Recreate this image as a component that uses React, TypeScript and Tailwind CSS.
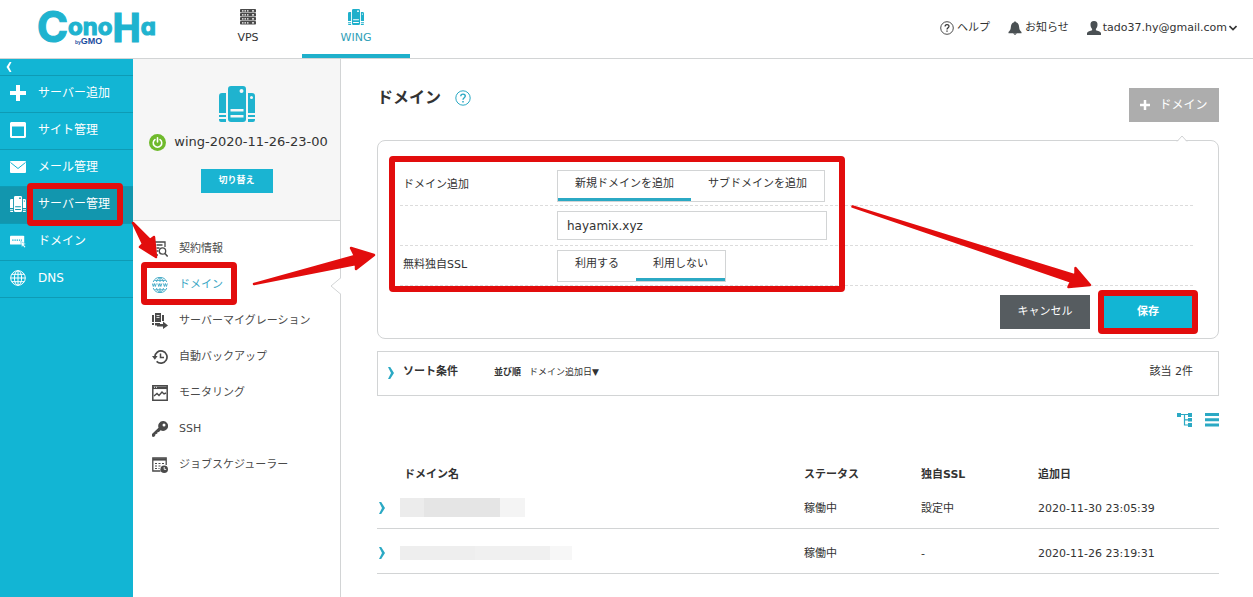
import { ReactNode, useState } from 'react'
import { clsx } from 'clsx'

const FONT = "font-['DejaVu_Sans','Noto_Sans_CJK_JP',sans-serif]"

interface IconProps {
  className?: string
}

function Logo() {
  return (
    <svg viewBox="0 0 114 36" className="h-9 w-[114px] overflow-visible" role="img" aria-label="ConoHa by GMO">
      <text
        x="-2"
        y="32"
        fill="#1fb3cf"
        stroke="#1fb3cf"
        strokeWidth="1.200"
        fontWeight="700"
        className="font-['Inter',sans-serif] [font-feature-settings:'cv11']"
      >
        <tspan fontSize="42">C</tspan>
        <tspan fontSize="24" dy="-7">ono</tspan>
        <tspan fontSize="40" dy="7" className="font-['Roboto',sans-serif]">H</tspan>
        <tspan fontSize="24" dy="-7">a</tspan>
      </text>
      <g fill="#1b4da0" className="font-['Liberation_Sans',sans-serif]" fontWeight="700">
        <text x="36" y="34">
          <tspan fontSize="5">by</tspan>
          <tspan fontSize="9">GMO</tspan>
        </text>
      </g>
    </svg>
  )
}

function WingIcon({ className }: IconProps) {
  return (
    <svg viewBox="0 0 36 36" className={className} fill="currentColor" aria-hidden="true">
      <path d="M7 7v20H0V10a3 3 0 0 1 3-3zM0 29h7v2H0zM0 33h7v3H2a2 2 0 0 1-2-2z" />
      <path
        fillRule="evenodd"
        d="M12 0h12a3 3 0 0 1 3 3v30a3 3 0 0 1-3 3H12a3 3 0 0 1-3-3V3a3 3 0 0 1 3-3zM22.500 3a2 2 0 1 0 0 4a2 2 0 0 0 0-4zM11.500 23v2.500h13V23zM11.500 29v2.500h13V29z"
      />
      <path
        fillRule="evenodd"
        d="M29 7h4a3 3 0 0 1 3 3v17h-7zM32.500 10a1.500 1.500 0 1 0 0 3a1.500 1.500 0 0 0 0-3zM29 29h7v2h-7zM29 33h7v1a2 2 0 0 1-2 2h-5z"
      />
    </svg>
  )
}

function VpsIcon({ className }: IconProps) {
  return (
    <svg viewBox="0 0 16 16" className={className} aria-hidden="true">
      {[0, 4, 8, 12].map((y) => (
        <g key={y}>
          <rect x="0" y={y} width="16" height="3.500" rx="0.800" fill="#4a4a4a" />
          <path d={`M2 ${y + 1.8}h1.500M4.500 ${y + 1.8}h1.500M7 ${y + 1.8}h1.500M12 ${y + 1.8}h2`} stroke="#fff" strokeWidth="1.200" />
        </g>
      ))}
    </svg>
  )
}

function PlusIcon({ className }: IconProps) {
  return (
    <svg viewBox="0 0 16 16" className={className} fill="currentColor" aria-hidden="true">
      <path d="M6 0h4v6h6v4h-6v6H6v-6H0V6h6z" />
    </svg>
  )
}

function SiteIcon({ className }: IconProps) {
  return (
    <svg viewBox="0 0 16 16" className={className} fill="currentColor" aria-hidden="true">
      <path fillRule="evenodd" d="M1 0h14l1 1v14l-1 1H1l-1-1V1zM2 4.500V14h12V4.500z" />
    </svg>
  )
}

function MailIcon({ className }: IconProps) {
  return (
    <svg viewBox="0 0 16 16" className={className} aria-hidden="true">
      <rect y="2" width="16" height="12" rx="1" fill="currentColor" />
      <path d="M.5 3.500L8 9.500l7.500-6" fill="none" stroke="#12b5d4" strokeWidth="1" />
    </svg>
  )
}

function DomainIcon({ className }: IconProps) {
  return (
    <svg viewBox="0 0 18 16" className={className} aria-hidden="true">
      <rect y="2" width="16" height="10" rx="1" fill="currentColor" />
      <path d="M2.500 7h1.500M5 7h1.500M7.500 7h1.500M10 7h1.500M12.500 7h1" stroke="#12b5d4" strokeWidth="1.300" />
      <path d="M12 8.500l6 3-2.300.8 1.800 2.200-1.200 1-1.800-2.200-1.200 1.700z" fill="currentColor" stroke="#12b5d4" strokeWidth="0.500" />
    </svg>
  )
}

function GlobeIcon({ className }: IconProps) {
  return (
    <svg viewBox="0 0 16 16" className={className} fill="none" stroke="currentColor" strokeWidth="1" aria-hidden="true">
      <circle cx="8" cy="8" r="7.300" />
      <ellipse cx="8" cy="8" rx="3.600" ry="7.300" />
      <path d="M8 .7v14.600M.7 8h14.600M1.800 4.300h12.400M1.800 11.700h12.400" />
    </svg>
  )
}

function ContractIcon({ className }: IconProps) {
  return (
    <svg viewBox="0 0 16 16" className={className} fill="none" stroke="currentColor" strokeWidth="1.300" aria-hidden="true">
      <path d="M13 6V1H2v13h4M4.500 4h6M4.500 7h3M4.500 10h2" />
      <circle cx="10.500" cy="10" r="3.200" />
      <path d="M13 12.500l2.700 3" strokeWidth="1.600" />
    </svg>
  )
}

function WwwIcon({ className }: IconProps) {
  return (
    <svg viewBox="0 0 16 16" className={className} fill="none" stroke="currentColor" strokeWidth="0.900" aria-hidden="true">
      <path d="M1.200 5A7.300 7.300 0 0 1 14.800 5M1.200 11A7.300 7.300 0 0 0 14.800 11M8 .7V5M8 11v4.300M4.500 5C5 3 6 1.500 8 .7C10 1.500 11 3 11.500 5M4.500 11C5 13 6 14.500 8 15.300C10 14.500 11 13 11.500 11M2.500 3.400h11M2.500 12.800h11" />
      <path d="M.3 6.500l1 3 1-3 1 3 1-3M5.800 6.500l1 3 1-3 1 3 1-3M11.400 6.500l1 3 1-3 1 3 1-3" />
    </svg>
  )
}

function MigrationIcon({ className }: IconProps) {
  return (
    <svg viewBox="0 0 16 16" className={className} fill="currentColor" aria-hidden="true">
      <path d="M0 2h2v7H0zM3 0h6v9H3zM10 2h2v6h-2zM0 10h2v2H0zM3 10h5v2.500H3z" />
      <path d="M4.500 2.500h3M4.500 4.500h3" stroke="#fff" strokeWidth="0.800" />
      <path d="M5 11h6V8.500l5 4-5 3.500v-2.500H5z" />
    </svg>
  )
}

function BackupIcon({ className }: IconProps) {
  return (
    <svg viewBox="0 0 16 16" className={className} fill="none" stroke="currentColor" strokeWidth="1.700" aria-hidden="true">
      <path d="M2.800 8a6.100 6.100 0 1 1 1.800 4.400" />
      <path d="M0 7h5.600L2.800 10.800z" fill="currentColor" stroke="none" />
      <path d="M8.500 4.500v4h3.500" strokeWidth="1.500" />
    </svg>
  )
}

function MonitorIcon({ className }: IconProps) {
  return (
    <svg viewBox="0 0 16 16" className={className} fill="none" stroke="currentColor" aria-hidden="true">
      <path d="M.8.8h14.400v14.400H.8z" strokeWidth="1.500" />
      <path d="M1 2.800h14" strokeWidth="2.500" />
      <path d="M2 11l3-2.500 2 2L10 7l2 2 2-1" strokeWidth="1.400" />
      <path d="M2 2.300h1M4 2.300h1" stroke="#fff" strokeWidth="0.900" />
    </svg>
  )
}

function KeyIcon({ className }: IconProps) {
  return (
    <svg viewBox="0 0 16 16" className={className} aria-hidden="true">
      <path
        fill="currentColor"
        fillRule="evenodd"
        d="M11 0a5 5 0 1 1-2.400 9.300L7 11l-1.500.2-.3 1.600-1.600.2-.4 1.600L2 16 0 15.500V13l6.500-6.300A5 5 0 0 1 11 0zM12 2.500a1.500 1.500 0 1 0 0 3a1.500 1.500 0 0 0 0-3z"
      />
    </svg>
  )
}

function SchedulerIcon({ className }: IconProps) {
  return (
    <svg viewBox="0 0 16 16" className={className} aria-hidden="true">
      <path d="M8.500 14H.8V1h13.400v7" fill="none" stroke="currentColor" strokeWidth="1.300" />
      <path d="M1 2.500h13" stroke="currentColor" strokeWidth="2.200" />
      <path d="M3 6.500h2M6.500 6.500h2M10 6.500h2M3 9h2M6.500 9h2M3 11.500h2M6.500 11.500h1" stroke="currentColor" strokeWidth="1.200" />
      <circle cx="12.200" cy="12.200" r="3.800" fill="currentColor" />
      <path d="M12.200 10v2.400h2" fill="none" stroke="#fff" strokeWidth="0.900" />
    </svg>
  )
}

function HelpIcon({ className }: IconProps) {
  return (
    <svg viewBox="0 0 16 16" className={className} fill="none" stroke="currentColor" aria-hidden="true">
      <circle cx="8" cy="8" r="7.200" strokeWidth="1" />
      <path d="M5.800 6.300C5.800 3.400 10.300 3.500 10.300 6.100C10.300 7.700 8 7.800 8 9.800" strokeWidth="1.400" />
      <path d="M8 10.900v1.500" strokeWidth="1.500" />
    </svg>
  )
}

function BellIcon({ className }: IconProps) {
  return (
    <svg viewBox="0 0 14 14" className={className} fill="currentColor" aria-hidden="true">
      <path d="M7 0l1 1.200C10.500 2 11 4 11.200 6.500C11.400 8.800 12 9.700 13.500 11v1.200H.5V11C2 9.700 2.600 8.800 2.800 6.500C3 4 3.500 2 6 1.200zM5 12.600h4L7 14z" />
    </svg>
  )
}

function UserIcon({ className }: IconProps) {
  return (
    <svg viewBox="0 0 14 14" className={className} fill="currentColor" aria-hidden="true">
      <path d="M7 0C9.500 0 10.700 1.600 10.500 4C10.300 6.200 9.500 7 8.900 8v1.300c1.800.7 4.600 1.200 5.100 2.600V14H0v-2.100c.5-1.400 3.300-1.900 5.100-2.600V8C4.500 7 3.700 6.200 3.500 4C3.300 1.600 4.500 0 7 0z" />
    </svg>
  )
}

function PowerIcon({ className }: IconProps) {
  return (
    <svg viewBox="0 0 16 16" className={className} fill="none" stroke="#fff" strokeWidth="1.500" strokeLinecap="round" aria-hidden="true">
      <circle cx="8" cy="8" r="8" fill="#6fba2c" stroke="none" />
      <path d="M5.600 5.200a4 4 0 1 0 4.800 0M8 3.600v4" />
    </svg>
  )
}

function Chevron({ className }: IconProps) {
  return (
    <svg viewBox="0 0 6 12" className={clsx('w-[6px]', className)} fill="currentColor" aria-hidden="true">
      <path d="M0 0h2.200L6 6l-3.800 6H0l3-6z" />
    </svg>
  )
}

// red frame laid over the control it points out
function Highlight({ className }: IconProps) {
  return <span className={clsx('pointer-events-none absolute z-10 rounded border-[6px] border-[#e20d0d]', className)} />
}

interface NavEntry {
  label: string
  icon: (props: IconProps) => ReactNode
  marked?: boolean
}

const mainNav: NavEntry[] = [
  { label: 'サーバー追加', icon: PlusIcon },
  { label: 'サイト管理', icon: SiteIcon },
  { label: 'メール管理', icon: MailIcon },
  { label: 'サーバー管理', icon: WingIcon, marked: true },
  { label: 'ドメイン', icon: DomainIcon },
  { label: 'DNS', icon: GlobeIcon },
]

const subNav: NavEntry[] = [
  { label: '契約情報', icon: ContractIcon },
  { label: 'ドメイン', icon: WwwIcon, marked: true },
  { label: 'サーバーマイグレーション', icon: MigrationIcon },
  { label: '自動バックアップ', icon: BackupIcon },
  { label: 'モニタリング', icon: MonitorIcon },
  { label: 'SSH', icon: KeyIcon },
  { label: 'ジョブスケジューラー', icon: SchedulerIcon },
]

function Header() {
  return (
    <header className="flex h-[59px] items-stretch border-b border-[#d2d4d5]">
      <a href="#" className="pt-[10px] pl-[39px]">
        <Logo />
      </a>
      <nav className="ml-[41px] flex text-[11px] leading-4">
        <a href="#" className="flex w-[108px] flex-col items-center gap-[5px] pt-[9px]">
          <VpsIcon className="size-4" />
          VPS
        </a>
        <a href="#" className="flex w-[108px] flex-col items-center gap-[5px] border-b-4 border-[#1fb0cb] pt-[9px] text-[#2f9fb8]">
          <WingIcon className="size-4 text-[#1fb0cb]" />
          WING
        </a>
      </nav>
      <div className="ml-auto flex items-center gap-[18px] pr-4 pb-[2px] text-[11px]">
        <a href="#" className="flex items-center gap-[3px]">
          <HelpIcon className="size-[14px]" />
          ヘルプ
        </a>
        <a href="#" className="flex items-center gap-[3px]">
          <BellIcon className="size-[14px] text-[#4a5053]" />
          お知らせ
        </a>
        <button type="button" className="flex items-center gap-[2px]">
          <UserIcon className="size-[14px] text-[#4a5053]" />
          tado37.hy@gmail.com
          <svg viewBox="0 0 8 6" className="h-[6px] w-2" fill="none" stroke="currentColor" strokeWidth="1.600" aria-hidden="true">
            <path d="M.5 1L4 4.500L7.500 1" />
          </svg>
        </button>
      </div>
    </header>
  )
}

function MainNav() {
  return (
    <nav className="w-[133px] shrink-0 bg-[#12b5d4] text-xs text-white">
      <button type="button" aria-label="閉じる" className="flex h-[17px] w-full items-center border-b border-[#0e9bb5] pl-[6px]">
        <Chevron className="h-[10px] rotate-180" />
      </button>
      {mainNav.map(({ label, icon: Icon, marked }) => (
        <a
          key={label}
          href="#"
          className={clsx('relative flex h-[37px] items-center gap-3 border-b border-[#0e9bb5] pb-[2px] pl-[10px]', marked && 'bg-[#1296ae]')}
        >
          <Icon className="size-4 shrink-0" />
          {label}
          {marked && <Highlight className="-top-1 -bottom-[3px] left-[27px] right-[10px]" />}
        </a>
      ))}
    </nav>
  )
}

function ServerPanel() {
  return (
    <aside className="w-[208px] shrink-0 border-r border-[#d2d4d5] text-[11px]">
      <div className="flex h-[162px] flex-col items-center border-b border-[#d2d4d5] bg-[#f6f6f6] pt-[27px]">
        <WingIcon className="size-9 text-[#1fb3cf]" />
        <p className="mt-[10px] flex items-center gap-2 pl-1 text-[13px] leading-5">
          <PowerIcon className="size-[17px]" />
          wing-2020-11-26-23-00
        </p>
        <button type="button" className="mt-[17px] h-6 w-[72px] bg-[#1ab4d2] text-[9px] font-bold text-white">
          切り替え
        </button>
      </div>
      <nav className="pt-[10px]">
        {subNav.map(({ label, icon: Icon, marked }) => (
          <a
            key={label}
            href="#"
            className={clsx('relative flex h-9 items-center gap-[11px] pl-[19px]', marked ? 'text-[#3aa6c4]' : 'text-[#4a4a4a]')}
          >
            <Icon className="size-4 shrink-0" />
            {label}
            {marked && (
              <>
                <Highlight className="-top-[5px] -bottom-[2px] left-2 w-24" />
                <svg viewBox="0 0 11 18" className="absolute top-[10px] -right-px h-[18px] w-[11px]" aria-hidden="true">
                  <path d="M11 1L1 9l10 8z" fill="#fff" />
                  <path d="M10.500 1L1 9l9.500 8" fill="none" stroke="#d2d4d5" />
                </svg>
              </>
            )}
          </a>
        ))}
      </nav>
    </aside>
  )
}

interface SegmentProps {
  label: string
  options: string[]
  initial: number
}

function Segment({ label, options, initial }: SegmentProps) {
  const [selected, setSelected] = useState(initial)
  return (
    <div role="group" aria-label={label} className="flex h-8 border border-[#d2d4d5] bg-white">
      {options.map((option, i) => (
        <button
          key={option}
          type="button"
          aria-pressed={i === selected}
          onClick={() => setSelected(i)}
          className={clsx('border-b-[3px] px-[17px]', i === selected ? 'border-[#2ba9c4]' : 'border-transparent')}
        >
          {option}
        </button>
      ))}
    </div>
  )
}

function FormRow({ label, children }: { label?: string; children: ReactNode }) {
  return (
    <div className="flex h-10 items-center border-b border-dashed border-[#dcdcdc] pl-[3px]">
      <span className="w-[154px] shrink-0">{label}</span>
      {children}
    </div>
  )
}

function DomainForm() {
  return (
    <form className="relative mt-[18px] rounded-lg border border-[#d2d4d5] pt-[25px] pr-[25px] pb-[9px] pl-[22px]">
      <svg viewBox="0 0 12 7" className="absolute -top-[6px] right-[30px] h-[7px] w-3" aria-hidden="true">
        <path d="M1 7l5-6 5 6z" fill="#fff" />
        <path d="M1 6.500L6 1l5 5.500" fill="none" stroke="#d2d4d5" />
      </svg>
      <FormRow label="ドメイン追加">
        <Segment label="ドメイン追加" options={['新規ドメインを追加', 'サブドメインを追加']} initial={0} />
      </FormRow>
      <FormRow>
        <input
          type="text"
          aria-label="ドメイン名"
          defaultValue="hayamix.xyz"
          className="h-[29px] w-[270px] border border-[#d2d4d5] px-[9px] text-xs outline-none"
        />
      </FormRow>
      <FormRow label="無料独自SSL">
        <Segment label="無料独自SSL" options={['利用する', '利用しない']} initial={1} />
      </FormRow>
      <div className="mt-[9px] flex justify-end gap-[13px] text-white">
        <button type="button" className="h-[34px] w-[90px] bg-[#565c60]">
          キャンセル
        </button>
        <div className="relative">
          <button type="submit" className="h-[34px] w-[90px] bg-[#12b5d4] font-bold">
            保存
          </button>
          <Highlight className="-inset-x-[5px] -inset-y-[5px]" />
        </div>
      </div>
      <Highlight className="top-[15px] left-[11px] h-[136px] w-[456px]" />
      <svg viewBox="0 0 244 90" className="pointer-events-none absolute top-[62px] right-[124px] h-[90px] w-[244px]" aria-hidden="true">
        <path
          d="M2.500 3.500L221 78.500L218.500 84L240 82L225.500 65L225.500 72.500Z"
          fill="#e20d0d"
          stroke="#e20d0d"
          strokeWidth="2.500"
          strokeLinejoin="round"
        />
      </svg>
    </form>
  )
}

function SortBar() {
  return (
    <div className="mt-3 flex h-[45px] items-center border border-[#d2d4d5] pr-[25px] pb-[2px] pl-[10px]">
      <button type="button" className="flex items-center gap-[9px] font-bold">
        <Chevron className="h-3 text-[#2ba9c4]" />
        ソート条件
      </button>
      <span className="ml-9 text-[9px] font-bold">並び順</span>
      <button type="button" className="ml-2 text-[9px]">
        ドメイン追加日▼
      </button>
      <span className="ml-auto">該当 2件</span>
    </div>
  )
}

function ViewSwitch() {
  return (
    <div className="mt-4 flex justify-end gap-[13px] text-[#2ba9c4]">
      <button type="button" aria-label="ツリー表示">
        <svg viewBox="0 0 15 15" className="size-[15px]" fill="currentColor" aria-hidden="true">
          <path d="M0 1h4v4H0zM11 1h4v4h-4zM11 6h4v3.500h-4zM11 11h4v4h-4z" />
          <path d="M4 2.500h7M7.500 2.500v10.500H11M7.500 7.800H11" fill="none" stroke="currentColor" strokeWidth="1.200" />
        </svg>
      </button>
      <button type="button" aria-label="リスト表示">
        <svg viewBox="0 0 14 15" className="h-[15px] w-[14px]" fill="currentColor" aria-hidden="true">
          <path d="M0 1h14v3H0zM0 6.300h14v3H0zM0 11.600h14v3H0z" />
        </svg>
      </button>
    </div>
  )
}

const domains = [
  {
    status: '稼働中',
    ssl: '設定中',
    added: '2020-11-30 23:05:39',
    mask: (
      <div className="flex h-[19px]">
        <span className="w-6 bg-[#ececec]" />
        <span className="w-[76px] bg-[#e5e5e5]" />
        <span className="w-[25px] bg-[#f4f4f4]" />
      </div>
    ),
  },
  {
    status: '稼働中',
    ssl: '-',
    added: '2020-11-26 23:19:31',
    mask: (
      <div className="flex h-[14px]">
        <span className="w-[75px] bg-[#eeeeee]" />
        <span className="w-[75px] bg-[#f0f0f0]" />
        <span className="w-[22px] bg-[#f7f7f7]" />
      </div>
    ),
  },
]

function DomainTable() {
  return (
    <table className="mt-[35px] w-full table-fixed text-left leading-4">
      <thead>
        <tr className="h-[21px]">
          <th className="w-[23px]" />
          <th className="pt-[5px] pl-1">ドメイン名</th>
          <th className="w-[117px] pt-[5px]">ステータス</th>
          <th className="w-[117px] pt-[5px]">独自SSL</th>
          <th className="w-[181px] pt-[5px]">追加日</th>
        </tr>
      </thead>
      <tbody>
        {domains.map(({ status, ssl, added, mask }) => (
          <tr key={added} className="h-[45px] border-b border-[#d2d4d5]">
            <td className="pt-[5px]">
              <button type="button" aria-label="詳細" className="flex pl-[2px] text-[#2ba9c4]">
                <Chevron className="h-3" />
              </button>
            </td>
            <td className="pt-[5px]">{mask}</td>
            <td className="pt-[7px]">{status}</td>
            <td className="pt-[7px]">{ssl}</td>
            <td className="pt-[7px]">{added}</td>
          </tr>
        ))}
      </tbody>
    </table>
  )
}

export default function App() {
  return (
    <div className={clsx(FONT, 'flex min-h-screen flex-col bg-white text-[#333]')}>
      <Header />
      <div className="relative flex grow">
        <MainNav />
        <ServerPanel />
        <main className="min-w-0 grow pt-[29px] pr-[34px] pl-9 text-[11px]">
          <div className="flex items-start justify-between">
            <div className="flex items-center gap-[14px]">
              <h1 className="text-base leading-5 font-bold">ドメイン</h1>
              <button type="button" aria-label="ヘルプ" className="text-[#2ba9c4]">
                <HelpIcon className="size-4" />
              </button>
            </div>
            <button type="button" className="flex h-[34px] w-[90px] items-center justify-center gap-[9px] bg-[#adadad] text-xs text-white">
              <PlusIcon className="size-[10px]" />
              ドメイン
            </button>
          </div>
          <DomainForm />
          <SortBar />
          <ViewSwitch />
          <DomainTable />
        </main>

        {/* arrows between the sidebars and the form */}
        <svg viewBox="0 0 250 120" className="pointer-events-none absolute top-[156px] left-[128px] z-20 h-[120px] w-[250px]" aria-hidden="true">
          <g fill="#e20d0d" stroke="#e20d0d" strokeWidth="2.500" strokeLinejoin="round">
            <path d="M5 8L15 29L12 32L28 42L26 22L22 25Z" />
            <path d="M126 69L228 49L228 54L246 40L223 33L227 41Z" />
          </g>
        </svg>
      </div>
    </div>
  )
}
